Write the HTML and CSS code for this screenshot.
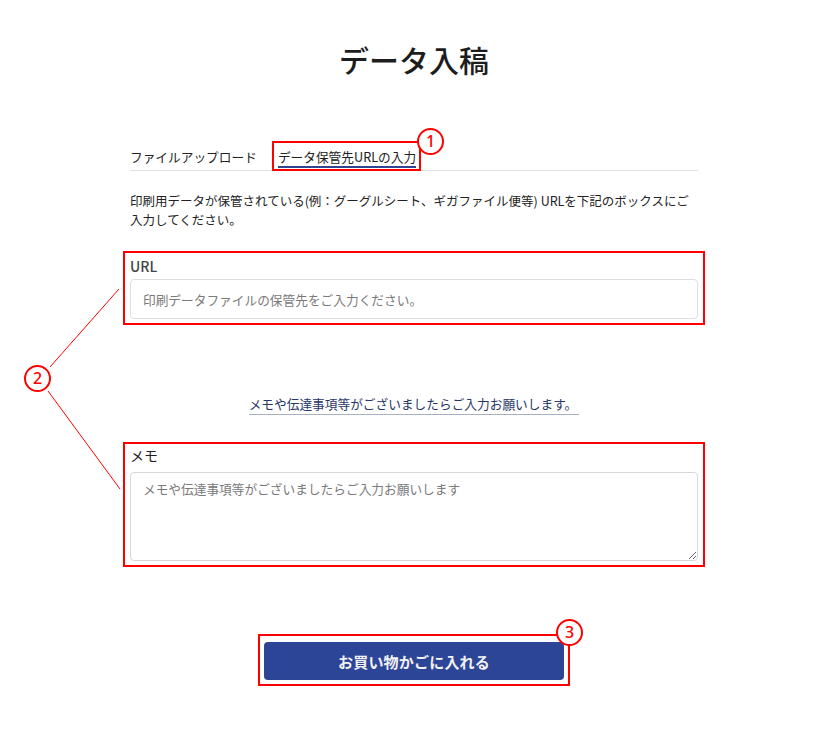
FILE: index.html
```html
<!DOCTYPE html>
<html lang="ja">
<head>
<meta charset="utf-8">
<link rel="stylesheet" href="styles.css">
</head>
<body>
<main class="page">
  <h1 class="title">データ入稿</h1>
  <div class="tabs">
    <span class="tab">ファイルアップロード</span>
    <span class="tab tab-active">データ保管先URLの入力
      <span class="mark mark-box mark-tab"></span>
      <span class="num num-1">1</span>
    </span>
  </div>
  <p class="desc">印刷用データが保管されている(例：グーグルシート、ギガファイル便等) URLを下記のボックスにご入力してください。</p>
  <div class="field field-url">
    <label class="label label-url">URL</label>
    <input class="input" type="text" placeholder="印刷データファイルの保管先をご入力ください。">
    <span class="mark mark-box mark-url"></span>
  </div>
  <div class="note"><span class="note-link">メモや伝達事項等がございましたらご入力お願いします。</span></div>
  <div class="field field-memo">
    <label class="label">メモ</label>
    <textarea class="textarea" placeholder="メモや伝達事項等がございましたらご入力お願いします"></textarea>
    <span class="mark mark-box mark-memo"></span>
  </div>
  <div class="actions">
    <div class="btn-wrap">
      <button class="btn">お買い物かごに入れる</button>
      <span class="mark mark-box mark-btn"></span>
      <span class="num num-3">3</span>
    </div>
  </div>
</main>
<svg class="callout" width="828" height="741" viewBox="0 0 828 741">
  <line x1="50" y1="367" x2="119" y2="289" stroke="#ff0000" stroke-width="1"/>
  <line x1="48" y1="391" x2="120" y2="489" stroke="#ff0000" stroke-width="1"/>
</svg>
<span class="num num-2">2</span>
</body>
</html>
```
FILE: styles.css
```css
* { box-sizing: border-box; }
body {
  margin: 0;
  background: #fff;
  font-family: "Noto Sans CJK JP", "Noto Sans", sans-serif;
  color: #222;
  position: relative;
  min-height: 741px;
}
.page {
  width: 568px;
  margin: 0 auto;
  padding-top: 37px;
  display: flex;
  flex-direction: column;
}
.title {
  margin: 0;
  text-align: center;
  font-size: 30px;
  font-weight: 500;
  line-height: 44px;
  color: #1d1d1d;
}
.tabs {
  margin-top: 66px;
  display: flex;
  gap: 21px;
  border-bottom: 1px solid #e2e2e2;
  height: 24px;
  align-items: flex-start;
}
.tab {
  position: relative;
  font-size: 12.7px;
  line-height: 18px;
  color: #222;
  padding-top: 1px;
}
.tab-active {
  height: 21px;
  border-bottom: 2px solid #2e4590;
}
.mark { position: absolute; pointer-events: none; }
.mark-box { border: 2px solid #ff0000; }
.mark-tab { left: -6px; right: -5px; top: -6px; bottom: -5px; }
.num {
  position: absolute;
  width: 27px;
  height: 27px;
  border: 2px solid #ff0000;
  border-radius: 50%;
  background: #fff;
  color: #ff0000;
  font-family: "Noto Sans", "Liberation Sans", sans-serif;
  font-size: 16px;
  font-weight: 500;
  line-height: 23px;
  text-align: center;
}
.num-1 { right: -28px; top: -19px; }
.num-2 { left: 24px; top: 365px; }
.num-3 { right: -19px; top: -23px; }
.desc {
  margin: 20px 0 0;
  font-size: 12.5px;
  line-height: 19px;
  color: #222;
}
.field {
  position: relative;
  display: flex;
  flex-direction: column;
}
.field-url { margin-top: 27px; }
.mark-url { left: -7px; right: -7px; top: -5px; bottom: -6px; }
.mark-memo { left: -7px; right: -7px; top: -3px; bottom: -6px; }
.label {
  font-size: 14px;
  line-height: 20px;
  margin-bottom: 7px;
  color: #1f1f1f;
}
.label-url {
  color: #444;
  font-weight: 500;
  margin-bottom: 3px;
}
.input {
  height: 40px;
  border: 1px solid #dcdee3;
  border-radius: 4px;
  padding: 0 12px;
  font-family: inherit;
  font-size: 12.7px;
  color: #333;
  outline: none;
}
.input::placeholder, .textarea::placeholder { color: #7a7a7a; }
.note {
  margin-top: 76px;
  display: flex;
  justify-content: center;
}
.note-link {
  font-size: 12.7px;
  line-height: 18px;
  color: #283766;
  border-bottom: 1px solid #a9b0c6;
  padding: 0 2px 1px 0;
}
.field-memo { margin-top: 30px; }
.textarea {
  height: 89px;
  border: 1px solid #d5d7dc;
  border-radius: 4px;
  padding: 7px 12px;
  font-family: inherit;
  font-size: 12.7px;
  line-height: 18px;
  resize: vertical;
  outline: none;
}
.actions {
  margin-top: 81px;
  display: flex;
  justify-content: center;
}
.btn-wrap { position: relative; }
.btn {
  width: 300px;
  height: 38px;
  border: none;
  border-radius: 4px;
  background: #2d4597;
  color: #f2f2f2;
  font-family: inherit;
  font-size: 15px;
  font-weight: 700;
  letter-spacing: 0.2px;
  display: block;
}
.mark-btn { left: -6px; right: -6px; top: -8px; bottom: -6px; }
.callout {
  position: absolute;
  left: 0;
  top: 0;
  pointer-events: none;
}
```
